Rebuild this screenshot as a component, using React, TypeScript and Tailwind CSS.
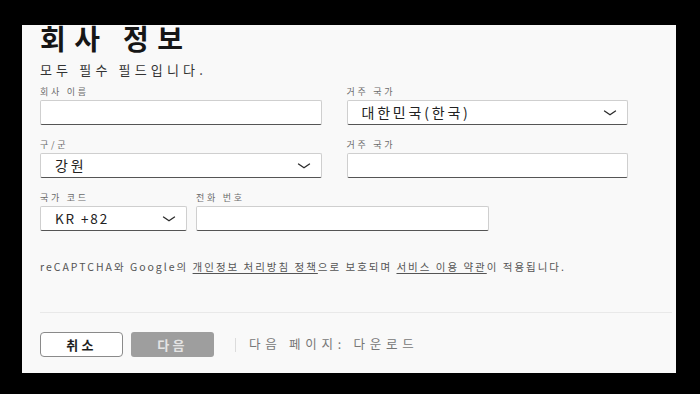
import React from 'react';

const font = { fontFamily: '"Noto Sans CJK KR", "Noto Sans", sans-serif' };

function Chevron() {
  return (
    <svg width="14" height="6" viewBox="0 0 14 6" fill="none" className="shrink-0">
      <path d="M1.5 1L7 4.8L12.5 1" stroke="#2b2b2b" strokeWidth="1.3" strokeLinecap="round" strokeLinejoin="round" />
    </svg>
  );
}

function Label({ children }: { children: React.ReactNode }) {
  return <div className="text-[9px] leading-[12px] tracking-[0.3em] text-[#6b6b6b] whitespace-nowrap">{children}</div>;
}

function TextBox() {
  return <div className="mt-[2px] h-[25px] bg-white border border-[#cfcfcf] border-b-[#555] rounded-[2px]" />;
}

function SelectBox({ value, wide }: { value: string; wide?: boolean }) {
  return (
    <div className="mt-[2px] h-[25px] bg-white border border-[#cfcfcf] border-b-[#555] rounded-[2px] flex items-center justify-between pl-[14px] pr-[10px]">
      <span className={wide ? 'text-[14px] tracking-[0.2em] text-[#222] whitespace-nowrap' : 'text-[13.5px] tracking-[0.14em] text-[#222] whitespace-nowrap'}>
        {value}
      </span>
      <Chevron />
    </div>
  );
}

export default function App() {
  return (
    <div className="w-[700px] h-[394px] bg-black pt-[25px] pl-[22px] overflow-hidden" style={font}>
      <div className="w-[654px] h-[348px] bg-[#f9f9f9] pl-[18px] pr-[4px] flex flex-col">
        {/* Header */}
        <h1 className="text-[28px] font-bold leading-[26px] tracking-[0.3em] text-[#161616] whitespace-nowrap">회사 정보</h1>
        <p className="mt-[11px] text-[13px] leading-[16px] tracking-[0.32em] text-[#333] whitespace-nowrap">모두 필수 필드입니다.</p>

        {/* Form */}
        <div className="mt-[8px] w-[588px] flex flex-col gap-[14px]">
          <div className="grid grid-cols-2 gap-x-[25px]">
            <div>
              <Label>회사 이름</Label>
              <TextBox />
            </div>
            <div>
              <Label>거주 국가</Label>
              <SelectBox value="대한민국(한국)" wide />
            </div>
          </div>
          <div className="grid grid-cols-2 gap-x-[25px]">
            <div>
              <Label>구/군</Label>
              <SelectBox value="강원" wide />
            </div>
            <div>
              <Label>거주 국가</Label>
              <TextBox />
            </div>
          </div>
          <div className="flex gap-[9px]">
            <div className="w-[147px]">
              <Label>국가 코드</Label>
              <SelectBox value="KR +82" />
            </div>
            <div className="w-[293px]">
              <Label>전화 번호</Label>
              <TextBox />
            </div>
          </div>
        </div>

        <p className="mt-[29px] text-[10.5px] leading-[14px] tracking-[0.19em] text-[#555] whitespace-nowrap">
          reCAPTCHA와 Google의 <span className="underline underline-offset-2">개인정보 처리방침 정책</span>으로 보호되며{' '}
          <span className="underline underline-offset-2">서비스 이용 약관</span>이 적용됩니다.
        </p>

        <div className="mt-[38px] h-px bg-[#e9e9e9]" />

        {/* Footer actions */}
        <div className="mt-[19px] flex items-center">
          <button className="w-[83px] h-[25px] bg-white border border-[#8a8a8a] rounded-[4px] text-[13px] font-bold tracking-[0.25em] text-[#1e1e1e]">
            취소
          </button>
          <button className="ml-[8px] w-[83px] h-[25px] bg-[#9e9e9e] rounded-[3px] text-[13px] font-bold tracking-[0.25em] text-[#e4e4e4]">
            다음
          </button>
          <div className="ml-[21px] w-px h-[14px] bg-[#dcdcdc]" />
          <span className="ml-[13px] text-[12.5px] tracking-[0.38em] text-[#777] whitespace-nowrap">다음 페이지: 다운로드</span>
        </div>
      </div>
    </div>
  );
}
